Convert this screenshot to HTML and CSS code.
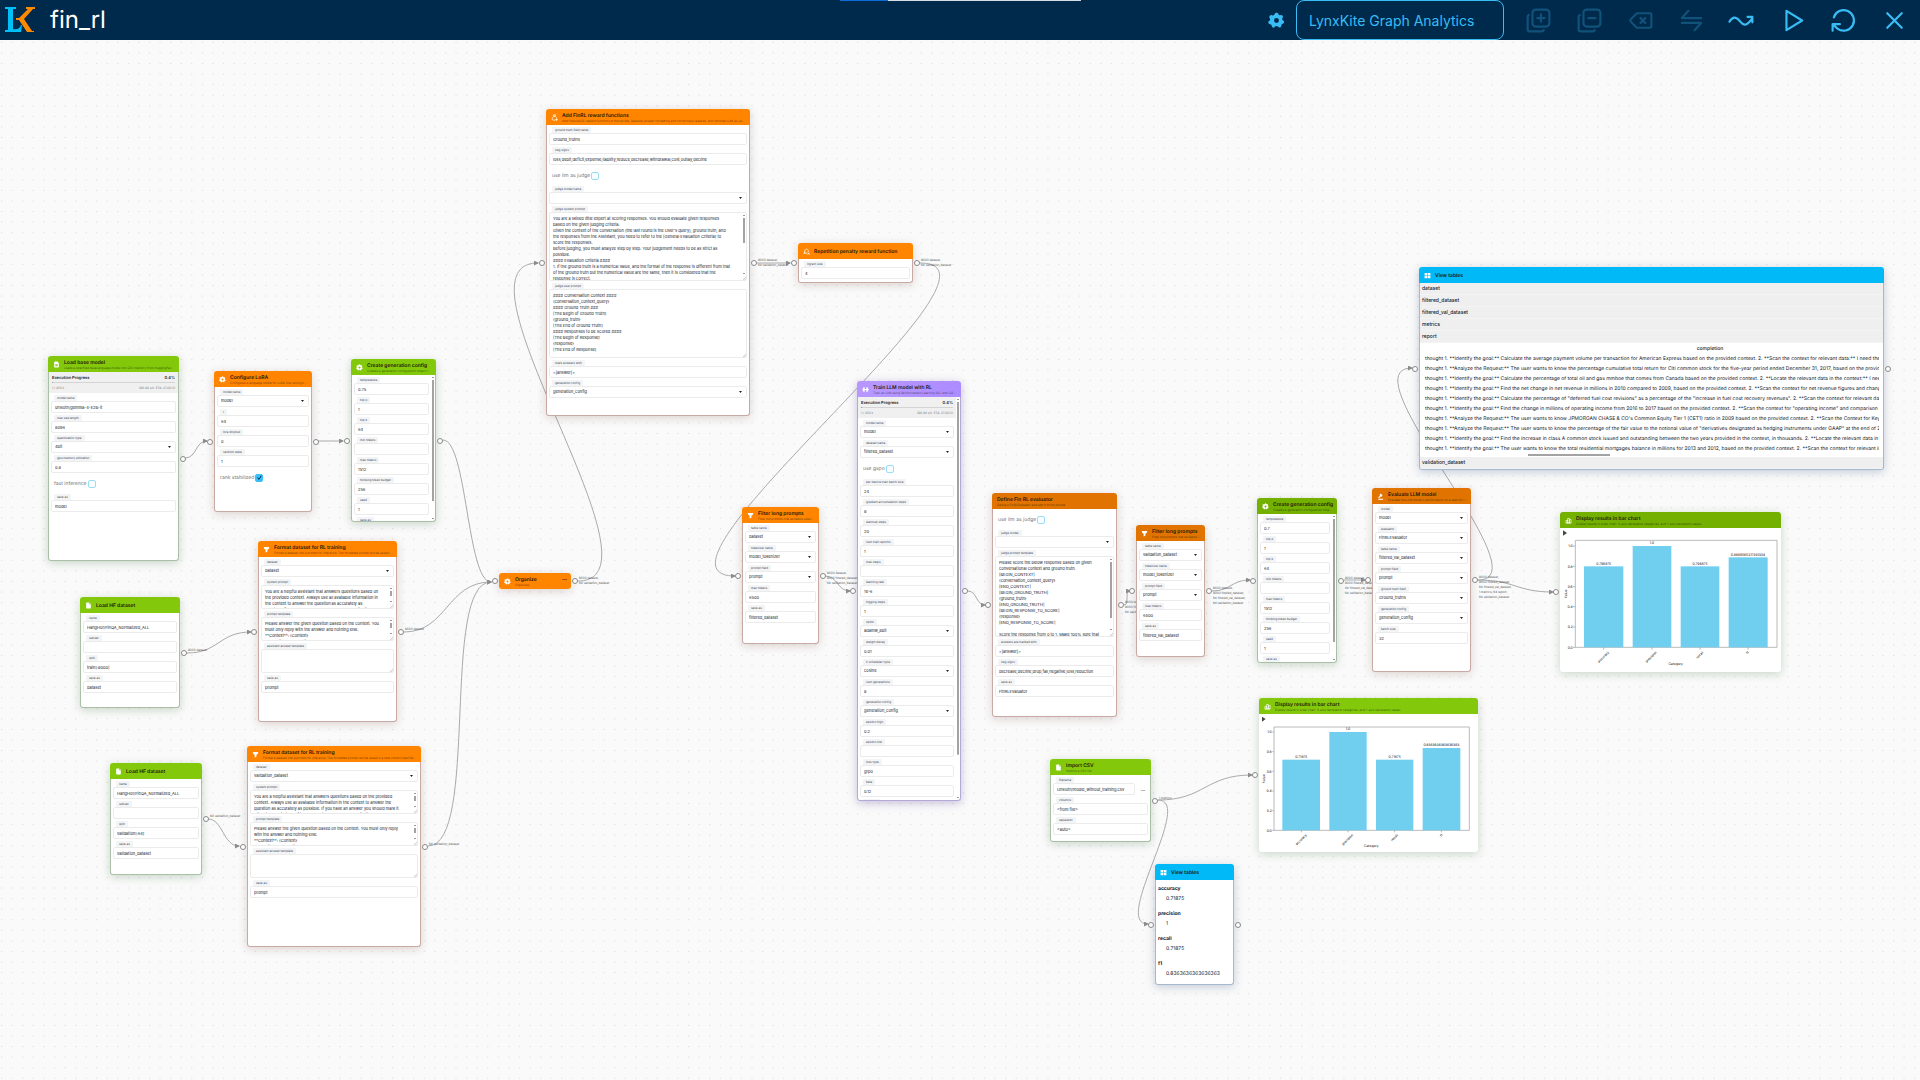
FILE: index.html
```html
<!DOCTYPE html>
<html lang="en">
<head>
<meta charset="utf-8">
<title>fin_rl</title>
<link rel="stylesheet" href="styles.css">
</head>
<body>
<svg class="sprite" aria-hidden="true">
  <symbol id="i-file" viewBox="0 0 24 24"><path fill="currentColor" d="M6 2h8v6h6v12a2 2 0 0 1-2 2H6a2 2 0 0 1-2-2V4a2 2 0 0 1 2-2zm10 0 4 4h-4z"/></symbol>
  <symbol id="i-model" viewBox="0 0 24 24"><path fill="currentColor" fill-rule="evenodd" d="M6 2h9l5 5v13a2 2 0 0 1-2 2H6a2 2 0 0 1-2-2V4a2 2 0 0 1 2-2zm2 9v7h8v-7zm2 2h1v3h-1zm3 0h1v3h-1z"/></symbol>
  <symbol id="i-gear" viewBox="0 0 24 24"><path fill="currentColor" fill-rule="evenodd" d="M14.6 2.8c-.7-2.4-4.500-2.400-5.200 0a2.700 2.700 0 0 1-4 1.700C3.200 3.400.9 6.800 2.100 8.300a2.700 2.700 0 0 1-.9 4.500v0c-1.600 1.500-.6 4.300 1.700 4.500a2.700 2.700 0 0 1 2.500 2.800c.4 2.400 3.700 2.500 4.300.9a2.700 2.700 0 0 1 4.600 0c1.500 1.500 4.500.7 4.500-1.700a2.700 2.700 0 0 1 2.300-2.700c2.300-.9 2-3.700.4-4.500a2.700 2.700 0 0 1-.6-4.200c1-2-1.300-4.500-3.300-3.400a2.700 2.700 0 0 1-3-1.700zM12 8.500a3.500 3.500 0 1 1 0 7 3.500 3.500 0 0 1 0-7z"/></symbol>
  <symbol id="i-filter" viewBox="0 0 24 24"><path fill="currentColor" d="M3 3h18v4.500l-6 6V20l-6 2v-8.500l-6-6z"/></symbol>
  <symbol id="i-bag" viewBox="0 0 24 24"><path fill="none" stroke="currentColor" stroke-width="2.500" stroke-linecap="round" d="M9 3h7l-2 5h-4zM14 21H8c-5 0-5-6-2-9l4-4h4l4 4M16 19h6m-3-3v6"/></symbol>
  <symbol id="i-penalty" viewBox="0 0 24 24"><path fill="none" stroke="currentColor" stroke-width="2.500" stroke-linecap="round" d="M6 17V9c0-7 12-7 12 0v5M3 18l3-4M5 18h8M17 17l5 5m0-5-5 5"/></symbol>
  <symbol id="i-train" viewBox="0 0 24 24"><path fill="currentColor" d="M1 10h2V7a1 1 0 0 1 2 0V5a1.500 1.500 0 0 1 4 0v5h6V5a1.500 1.500 0 0 1 4 0v2a1 1 0 0 1 2 0v3h2v4h-2v3a1 1 0 0 1-2 0v2a1.500 1.500 0 0 1-4 0v-5H9v5a1.500 1.500 0 0 1-4 0v-2a1 1 0 0 1-2 0v-3H1z"/></symbol>
  <symbol id="i-gavel" viewBox="0 0 24 24"><path fill="currentColor" d="m12 2 7 6-4 5-2-1-6 6-3-3 6-6-1-2zM4 20h17v3H4z"/></symbol>
  <symbol id="i-chart" viewBox="0 0 24 24"><path fill="none" stroke="currentColor" stroke-width="2.300" d="M3 12h6v8H3zM9 5h6v15H9zM15 9h6v11h-6zM3 21h18"/></symbol>
  <symbol id="i-grid" viewBox="0 0 24 24"><path fill="currentColor" d="M2 3h9v8H2zM13 3h9v8h-9zM2 13h9v8H2zM13 13h9v8h-9z"/></symbol>
</svg>

<header class="topbar">
  <div class="loading"></div>
  <a class="logo" href="#" aria-label="LynxKite">
    <svg viewBox="0 0 32 28"><path fill="#00c0f8" d="M1 1h11v2H9v20c5 1 7-1 8-4h1l-1 7H1v-2h3V3H1z"/><path fill="#ff8a00" d="M22 1h9v2h-2l-9 10 8 12h2v1h-7l-8-12h-3v-2h3l9-9h-2z"/></svg>
  </a>
  <h1 class="workspace">fin_rl</h1>
  <div class="tools">
    <svg class="gear"><use href="#i-gear"/></svg>
    <select class="env" aria-label="Environment"><option>LynxKite Graph Analytics</option></select>
    <div class="actions">
      <button disabled aria-label="Group"><svg viewBox="0 0 24 24"><path d="M7 5.700A2.700 2.700 0 0 1 9.700 3h8.600A2.700 2.700 0 0 1 21 5.700v8.600a2.700 2.700 0 0 1-2.700 2.700H9.700A2.700 2.700 0 0 1 7 14.300zM4 7.500A2 2 0 0 0 3 9.300v9.900c0 1 .8 1.800 1.800 1.800h9.900c.8 0 1.300-.4 1.700-1M11 10h6M14 7v6"/></svg></button>
      <button disabled aria-label="Ungroup"><svg viewBox="0 0 24 24"><path d="M7 5.700A2.700 2.700 0 0 1 9.700 3h8.600A2.700 2.700 0 0 1 21 5.700v8.600a2.700 2.700 0 0 1-2.700 2.700H9.700A2.700 2.700 0 0 1 7 14.300zM4 7.500A2 2 0 0 0 3 9.300v9.900c0 1 .8 1.800 1.800 1.800h9.900c.8 0 1.300-.4 1.700-1M11 10h6"/></svg></button>
      <button disabled aria-label="Delete"><svg viewBox="0 0 24 24"><path d="M20 6a1 1 0 0 1 1 1v10a1 1 0 0 1-1 1H9l-5-5a1.500 1.500 0 0 1 0-2l5-5zM12 10l4 4M16 10l-4 4"/></svg></button>
      <button disabled aria-label="Change type"><svg viewBox="0 0 24 24"><path d="M20 10H4l5.500-6M4 14h16l-5.500 6"/></svg></button>
      <button aria-label="Restart paths"><svg viewBox="0 0 24 24"><path d="M2 13c3-5 6-4 9 0s6 3 10-3M17 9h4v4.500"/></svg></button>
      <button aria-label="Run"><svg viewBox="0 0 24 24"><path d="M7 4v16l13-8z"/></svg></button>
      <button aria-label="Reload"><svg viewBox="0 0 24 24"><path d="M4 9.500a8.500 8.500 0 1 1 3 9.200M3 20.500V15h6M3.500 15.500l3.500 3.200"/></svg></button>
      <button aria-label="Close"><svg viewBox="0 0 24 24"><path d="M18 6 6 18M6 6l12 12"/></svg></button>
    </div>
  </div>
</header>

<main class="canvas">
  <svg class="edges">
    <defs>
      <pattern id="dots" x="0" y="0" width="10.570" height="10.570" patternUnits="userSpaceOnUse"><circle cx="1.600" cy="2.400" r=".7" fill="#dedede"/></pattern>
      <marker id="arrow" viewBox="0 0 5 5" refX="4" refY="2.500" markerWidth="5" markerHeight="5" orient="auto"><path d="M0 0l5 2.500-5 2.500z" fill="#8c8c8c"/></marker>
    </defs>
    <rect width="100%" height="100%" fill="url(#dots)"/>
    <g class="lines" transform="translate(0 -40)">
      <path d="M185 458C197 458 195 441 207 441"/>
      <path d="M318 441H343"/>
      <path d="M443 440C467 440 467 582 491 582"/>
      <path d="M187 653C219 653 219 632 251 632"/>
      <path d="M404 632C447 632 447 582 491 582"/>
      <path d="M208 819C223 819 223 846 239 846"/>
      <path d="M428 846C480 846 440 582 491 582"/>
      <path d="M578 581C674 581 442 263 538 263"/>
      <path d="M757 263H790"/>
      <path d="M920 263C1032 263 623 576 735 576"/>
      <path d="M825 576C838 576 837 591 850 591"/>
      <path d="M968 591C977 591 976 605 985 605"/>
      <path d="M1124 605C1130 605 1124 591 1130 591"/>
      <path d="M1212 591C1231 591 1231 580 1250 580"/>
      <path d="M1344 580H1365"/>
      <path d="M1478 580C1515 580 1516 592 1553 592"/>
      <path d="M1478 580C1546 580 1344 368 1412 368"/>
      <path d="M1158 800C1205 800 1205 775 1252 775"/>
      <path d="M1158 800C1195 800 1111 924 1148 924"/>
    </g>
  </svg>

  <section class="node green n-base">
    <header><svg><use href="#i-model"/></svg><div><h2>Load base model</h2><p>Loads a specified base language model into GPU memory from HuggingFace (or local path).</p></div></header>
    <div class="body">
      <div class="progress"><div><b>Execution Progress</b><b>0.4%</b></div><progress value="1" max="250"></progress><div><span>1 / 250 it</span><span>390.49 s/it &nbsp;ETA: 27:00:31</span></div></div>
      <label class="field"><span>model name</span><input value="unsloth/gemma-4-E2B-it"></label>
      <label class="field"><span>max seq length</span><input value="8096"></label>
      <label class="field"><span>quantization type</span><select><option>4bit</option></select></label>
      <label class="field"><span>gpu memory utilization</span><input value="0.8"></label>
      <label class="check">fast inference<input type="checkbox"></label>
      <label class="field"><span>save as</span><input value="model"></label>
    </div>
    <i class="port out"></i>
  </section>

  <section class="node orange n-lora">
    <header><svg><use href="#i-gear"/></svg><div><h2>Configure LoRA</h2><p>Configures a language model for LoRA fine-tuning by adding adapters.</p></div></header>
    <div class="body">
      <label class="field"><span>model name</span><select><option>model</option></select></label>
      <label class="field"><span>r</span><input value="64"></label>
      <label class="field"><span>lora dropout</span><input value="0"></label>
      <label class="field"><span>random state</span><input value="1"></label>
      <label class="check">rank stabilized<input type="checkbox" checked></label>
    </div>
    <i class="port in"></i><i class="port out"></i>
  </section>

  <section class="node green n-gen1">
    <header><svg><use href="#i-gear"/></svg><div><h2>Create generation config</h2><p>Creates a generation configuration object that can be used.</p></div></header>
    <div class="body scroll">
      <label class="field"><span>temperature</span><input value="0.75"></label>
      <label class="field"><span>top p</span><input value="1"></label>
      <label class="field"><span>top k</span><input value="64"></label>
      <label class="field"><span>min tokens</span><input></label>
      <label class="field"><span>max tokens</span><input value="1512"></label>
      <label class="field"><span>thinking token budget</span><input value="256"></label>
      <label class="field"><span>seed</span><input value="1"></label>
      <label class="field"><span>save as</span><input value="generation_config"></label>
    </div>
    <i class="port in"></i><i class="port out"></i>
  </section>

  <section class="node orange n-format1">
    <header><svg><use href="#i-filter"/></svg><div><h2>Format dataset for RL training</h2><p>Format a dataset into a prompt for inference. The formatted prompt will be saved in a new column.</p></div></header>
    <div class="body">
      <label class="field"><span>dataset</span><select><option>dataset</option></select></label>
      <label class="field"><span>system prompt</span><textarea class="long">You are a helpful assistant that answers questions based on
the provided context. Always use all available information in
the context to answer the question as accurately as
possible. If you have an answer you should mark it with
&lt;|answer|&gt; tags.</textarea></label>
      <label class="field"><span>prompt template</span><textarea class="long">Please answer the given question based on the context. You
must only reply with the answer and nothing else.
**Context**: {Context}
**Question**: {Question}</textarea></label>
      <label class="field"><span>assistant answer template</span><textarea></textarea></label>
      <label class="field"><span>save as</span><input value="prompt"></label>
    </div>
    <i class="port in"></i><i class="port out"></i><p class="tables">8000 dataset</p>
  </section>

  <section class="node green n-hf1">
    <header><svg><use href="#i-file"/></svg><div><h2>Load HF dataset</h2></div></header>
    <div class="body">
      <label class="field"><span>name</span><input value="HangHor/FinQA_Normalized_ALL"></label>
      <label class="field"><span>subset</span><input></label>
      <label class="field"><span>split</span><input value="train[:8000]"></label>
      <label class="field"><span>save as</span><input value="dataset"></label>
    </div>
    <i class="port out"></i><p class="tables">8000 dataset</p>
  </section>

  <section class="node green n-hf2">
    <header><svg><use href="#i-file"/></svg><div><h2>Load HF dataset</h2></div></header>
    <div class="body">
      <label class="field"><span>name</span><input value="HangHor/FinQA_Normalized_ALL"></label>
      <label class="field"><span>subset</span><input></label>
      <label class="field"><span>split</span><input value="validation[:64]"></label>
      <label class="field"><span>save as</span><input value="validation_dataset"></label>
    </div>
    <i class="port out"></i><p class="tables">64 validation_dataset</p>
  </section>

  <section class="node orange n-format2">
    <header><svg><use href="#i-filter"/></svg><div><h2>Format dataset for RL training</h2><p>Format a dataset into a prompt for inference. The formatted prompt will be saved in a new column specified by the user.</p></div></header>
    <div class="body">
      <label class="field"><span>dataset</span><select><option>validation_dataset</option></select></label>
      <label class="field"><span>system prompt</span><textarea class="long">You are a helpful assistant that answers questions based on the provided
context. Always use all available information in the context to answer the
question as accurately as possible. If you have an answer you should mark it
with &lt;|answer|&gt; tags. If the answer is a number, reply with it only.</textarea></label>
      <label class="field"><span>prompt template</span><textarea class="long">Please answer the given question based on the context. You must only reply
with the answer and nothing else.
**Context**: {Context}
**Question**: {Question}</textarea></label>
      <label class="field"><span>assistant answer template</span><textarea></textarea></label>
      <label class="field"><span>save as</span><input value="prompt"></label>
    </div>
    <i class="port in"></i><i class="port out"></i><p class="tables">64 validation_dataset</p>
  </section>

  <section class="node orange n-organize">
    <header><svg><use href="#i-gear"/></svg><div><h2>Organize</h2><p>Organizes</p></div><button aria-label="More">•••</button></header>
    <i class="port in"></i><i class="port out"></i><p class="tables">8000 dataset,<br>64 validation_dataset</p>
  </section>

  <section class="node orange n-reward">
    <header><svg><use href="#i-bag"/></svg><div><h2>Add FinRL reward functions</h2><p>Add financial RL reward functions to the bundle. Rewards answer formatting and correctness rewards, with optional LLM-as-Judge based scoring.</p></div></header>
    <div class="body">
      <label class="field"><span>ground truth field name</span><input value="Ground_truths"></label>
      <label class="field"><span>neg signs</span><input value="loss,debit,deficit,expense,liability,reduce,decrease,withdrawal,cost,outlay,decline"></label>
      <label class="check">use llm as judge<input type="checkbox"></label>
      <label class="field"><span>judge model name</span><select><option></option></select></label>
      <label class="field"><span>judge system prompt</span><textarea class="tall long">You are a skilled little expert at scoring responses. You should evaluate given responses
based on the given judging criteria.
Given the context of the conversation (the last round is the User's query), ground truth, and
the responses from the Assistant, you need to refer to the [General Evaluation Criteria] to
score the responses.
Before judging, you must analyze step by step. Your judgement needs to be as strict as
possible.
#### Evaluation Criteria ####
1. If the ground truth is a numerical value, and the format of the response is different from that
of the ground truth but the numerical value are the same, then it is considered that the
response is correct.</textarea></label>
      <label class="field"><span>judge user prompt</span><textarea class="tall">#### Conversation Context ####
{conversation_context_query}
#### Ground Truth ###
[The Begin of Ground Truth]
{ground_truth}
[The End of Ground Truth]
#### Responses to be Scored ####
[The Begin of Response]
{response}
[The End of Response]</textarea></label>
      <label class="field"><span>mark answers with</span><input value="&lt;|answer|&gt;"></label>
      <label class="field"><span>generation config</span><select><option>generation_config</option></select></label>
    </div>
    <i class="port in"></i><i class="port out"></i><p class="tables">8000 dataset,<br>64 validation_dataset</p>
  </section>

  <section class="node orange n-repeat">
    <header><svg><use href="#i-penalty"/></svg><div><h2>Repetition penalty reward function</h2></div></header>
    <div class="body">
      <label class="field"><span>ngram size</span><input value="4"></label>
    </div>
    <i class="port in"></i><i class="port out"></i><p class="tables">8000 dataset,<br>64 validation_dataset</p>
  </section>

  <section class="node purple n-train">
    <header><svg><use href="#i-train"/></svg><div><h2>Train LLM model with RL</h2><p>Train an LLM using Reinforcement Learning (RL) with GRPO</p></div></header>
    <div class="body scroll">
      <div class="progress"><div><b>Execution Progress</b><b>0.4%</b></div><progress value="1" max="250"></progress><div><span>1 / 250 it</span><span>390.49 s/it &nbsp;ETA: 27:00:31</span></div></div>
      <label class="field"><span>model name</span><select><option>model</option></select></label>
      <label class="field"><span>dataset name</span><select><option>filtered_dataset</option></select></label>
      <label class="check">use gspo<input type="checkbox"></label>
      <label class="field"><span>per device train batch size</span><input value="24"></label>
      <label class="field"><span>gradient accumulation steps</span><input value="8"></label>
      <label class="field"><span>warmup steps</span><input value="20"></label>
      <label class="field"><span>num train epochs</span><input value="1"></label>
      <label class="field"><span>max steps</span><input></label>
      <label class="field"><span>learning rate</span><input value="1e-6"></label>
      <label class="field"><span>logging steps</span><input value="1"></label>
      <label class="field"><span>optim</span><select><option>adamw_8bit</option></select></label>
      <label class="field"><span>weight decay</span><input value="0.01"></label>
      <label class="field"><span>lr scheduler type</span><select><option>cosine</option></select></label>
      <label class="field"><span>num generations</span><input value="8"></label>
      <label class="field"><span>generation config</span><select><option>generation_config</option></select></label>
      <label class="field"><span>epsilon high</span><input value="0.2"></label>
      <label class="field"><span>epsilon low</span><input></label>
      <label class="field"><span>loss type</span><input value="grpo"></label>
      <label class="field"><span>beta</span><input value="0.12"></label>
      <label class="field"><span>save as</span><input value="model"></label>
    </div>
    <i class="port in"></i><i class="port out"></i>
  </section>

  <section class="node orange n-filter1">
    <header><svg><use href="#i-filter"/></svg><div><h2>Filter long prompts</h2><p>Filter out prompts that exceed a specified token count.</p></div></header>
    <div class="body">
      <label class="field"><span>table name</span><select><option>dataset</option></select></label>
      <label class="field"><span>tokenizer name</span><select><option>model_tokenizer</option></select></label>
      <label class="field"><span>prompt field</span><select><option>prompt</option></select></label>
      <label class="field"><span>max tokens</span><input value="6500"></label>
      <label class="field"><span>save as</span><input value="filtered_dataset"></label>
    </div>
    <i class="port in"></i><i class="port out"></i><p class="tables">8000 dataset,<br>8000 filtered_dataset,<br>64 validation_dataset</p>
  </section>

  <section class="node amber n-define">
    <header><div><h2>Define Fin RL evaluator</h2><p>Define a FinRLEvaluator and add it to the bundle.</p></div></header>
    <div class="body">
      <label class="check">use llm as judge<input type="checkbox"></label>
      <label class="field"><span>judge model</span><select><option></option></select></label>
      <label class="field"><span>judge prompt template</span><textarea class="taller long">Please score the below response based on given
conversational context and ground truth.
[BEGIN_CONTEXT]
{conversation_context_query}
[END_CONTEXT]
[BEGIN_GROUND_TRUTH]
{ground_truth}
[END_GROUND_TRUTH]
[BEGIN_RESPONSE_TO_SCORE]
{response}
[END_RESPONSE_TO_SCORE]

Score the response from 0 to 1. Make 100% sure that
you reply with the score.</textarea></label>
      <label class="field"><span>answers are marked with</span><input value="&lt;|answer|&gt;"></label>
      <label class="field"><span>neg signs</span><input value="decrease,decline,drop,fall,negative,loss,reduction"></label>
      <label class="field"><span>save as</span><input value="FinRLEvaluator"></label>
    </div>
    <i class="port in"></i><i class="port out"></i><p class="tables">8000 dataset,<br>8000 filtered_dataset,<br>64 validation_dataset</p>
  </section>

  <section class="node amber n-filter2">
    <header><svg><use href="#i-filter"/></svg><div><h2>Filter long prompts</h2><p>Filter out prompts that exceed a specified token count.</p></div></header>
    <div class="body">
      <label class="field"><span>table name</span><select><option>validation_dataset</option></select></label>
      <label class="field"><span>tokenizer name</span><select><option>model_tokenizer</option></select></label>
      <label class="field"><span>prompt field</span><select><option>prompt</option></select></label>
      <label class="field"><span>max tokens</span><input value="6500"></label>
      <label class="field"><span>save as</span><input value="filtered_val_dataset"></label>
    </div>
    <i class="port in"></i><i class="port out"></i><p class="tables">8000 dataset,<br>8000 filtered_dataset,<br>64 filtered_val_dataset,<br>64 validation_dataset</p>
  </section>

  <section class="node moss n-gen2">
    <header><svg><use href="#i-gear"/></svg><div><h2>Create generation config</h2><p>Creates a generation configuration object that can be used.</p></div></header>
    <div class="body scroll">
      <label class="field"><span>temperature</span><input value="0.7"></label>
      <label class="field"><span>top p</span><input value="1"></label>
      <label class="field"><span>top k</span><input value="64"></label>
      <label class="field"><span>min tokens</span><input></label>
      <label class="field"><span>max tokens</span><input value="1512"></label>
      <label class="field"><span>thinking token budget</span><input value="256"></label>
      <label class="field"><span>seed</span><input value="1"></label>
      <label class="field"><span>save as</span><input value="generation_config"></label>
    </div>
    <i class="port in"></i><i class="port out"></i><p class="tables">8000 dataset,<br>8000 filtered_dataset,<br>64 filtered_val_dataset,<br>64 validation_dataset</p>
  </section>

  <section class="node amber n-eval">
    <header><svg><use href="#i-gavel"/></svg><div><h2>Evaluate LLM model</h2><p>Evaluate the LLM model's performance on a specific task using metrics.</p></div></header>
    <div class="body">
      <label class="field"><span>model</span><select><option>model</option></select></label>
      <label class="field"><span>evaluator</span><select><option>FinRLEvaluator</option></select></label>
      <label class="field"><span>table name</span><select><option>filtered_val_dataset</option></select></label>
      <label class="field"><span>prompt field</span><select><option>prompt</option></select></label>
      <label class="field"><span>ground truth field</span><select><option>Ground_truths</option></select></label>
      <label class="field"><span>generation config</span><select><option>generation_config</option></select></label>
      <label class="field"><span>batch size</span><input value="32"></label>
    </div>
    <i class="port in"></i><i class="port out"></i><p class="tables">8000 dataset,<br>8000 filtered_dataset,<br>64 filtered_val_dataset,<br>1 metrics, 64 report,<br>64 validation_dataset</p>
  </section>

  <section class="node moss n-chart1">
    <header><svg><use href="#i-chart"/></svg><div><h2>Display results in bar chart</h2><p>Display results in a bar chart. X-axis represents categories, and Y-axis represents values.</p></div></header>
    <div class="body chart">
      <svg viewBox="631 174 663 432">
        <path class="tri" d="M640 181v16l12-8z"/>
        <path class="frame" d="M677 211h605v321H677zM670 532h7M670 471h7M670 410h7M670 350h7M670 289h7M670 228h7M762 532v7M907 532v7M1051 532v7M1195 532v7"/>
        <g class="bars"><rect x="703" y="289" width="118" height="243"/><rect x="849" y="228" width="116" height="304"/><rect x="993" y="289" width="116" height="243"/><rect x="1137" y="262" width="117" height="270"/></g>
        <g class="mid"><text x="762" y="284">0.796875</text><text x="907" y="223">1.0</text><text x="1051" y="284">0.796875</text><text x="1195" y="257">0.8869565217391304</text><text x="978" y="585">Category</text><text transform="translate(651 372) rotate(-90)">Value</text></g>
        <g class="end"><text x="669" y="536">0.0</text><text x="669" y="475">0.2</text><text x="669" y="414">0.4</text><text x="669" y="354">0.6</text><text x="669" y="293">0.8</text><text x="669" y="232">1.0</text><text transform="translate(779 548) rotate(-45)">accuracy</text><text transform="translate(922 548) rotate(-45)">precision</text><text transform="translate(1062 548) rotate(-45)">recall</text><text transform="translate(1199 548) rotate(-45)">f1</text></g>
      </svg>
    </div>
    <i class="port in"></i>
  </section>

  <section class="node sky n-view1">
    <header><svg><use href="#i-grid"/></svg><div><h2>View tables</h2></div></header>
    <div class="body views">
      <button>dataset</button><button>filtered_dataset</button><button>filtered_val_dataset</button><button>metrics</button><button>report</button>
      <div class="report">
        <table>
          <thead><tr><th>completion</th></tr></thead>
          <tbody>
            <tr><td>thought 1. **Identify the goal:** Calculate the average payment volume per transaction for American Express based on the provided context. 2. **Scan the context for relevant data:** I need the payment volume</td></tr>
            <tr><td>thought 1. **Analyze the Request:** The user wants to know the percentage cumulative total return for Citi common stock for the five-year period ended December 31, 2017, based on the provided context.</td></tr>
            <tr><td>thought 1. **Identify the goal:** Calculate the percentage of total oil and gas mmboe that comes from Canada based on the provided context. 2. **Locate the relevant data in the context:** I need the total</td></tr>
            <tr><td>thought 1. **Identify the goal:** Find the net change in net revenue in millions in 2010 compared to 2009, based on the provided context. 2. **Scan the context for net revenue figures and changes:** The</td></tr>
            <tr><td>thought 1. **Identify the goal:** Calculate the percentage of "deferred fuel cost revisions" as a percentage of the "increase in fuel cost recovery revenues". 2. **Scan the context for relevant data points</td></tr>
            <tr><td>thought 1. **Identify the goal:** Find the change in millions of operating income from 2016 to 2017 based on the provided context. 2. **Scan the context for "operating income" and comparison data (2016</td></tr>
            <tr><td>thought 1. **Analyze the Request:** The user wants to know JPMORGAN CHASE &amp; CO's Common Equity Tier 1 (CET1) ratio in 2009 based on the provided context. 2. **Scan the Context for Keywords and</td></tr>
            <tr><td>thought 1. **Analyze the Request:** The user wants to know the percentage of the fair value to the notional value of "derivatives designated as hedging instruments under GAAP" at the end of 2014, based</td></tr>
            <tr><td>thought 1. **Identify the goal:** Find the increase in class A common stock issued and outstanding between the two years provided in the context, in thousands. 2. **Locate the relevant data in the context</td></tr>
            <tr><td>thought 1. **Identify the goal:** The user wants to know the total residential mortgages balance in millions for 2013 and 2012, based on the provided context. 2. **Scan the context for relevant information</td></tr>
          </tbody>
        </table>
        <i class="bar-v"></i><i class="bar-h"></i>
      </div>
      <button>validation_dataset</button>
    </div>
    <i class="port in"></i><i class="port out"></i>
  </section>

  <section class="node green n-csv">
    <header><svg><use href="#i-file"/></svg><div><h2>Import CSV</h2><p>Imports a CSV file.</p></div></header>
    <div class="body">
      <div class="with-button"><label class="field"><span>filename</span><input value="Unsloth/model_without_training.csv"></label><button aria-label="Browse">…</button></div>
      <label class="field"><span>columns</span><input value="&lt;from file&gt;"></label>
      <label class="field"><span>separator</span><input value="&lt;auto&gt;"></label>
    </div>
    <i class="port out"></i><p class="tables">1 metrics</p>
  </section>

  <section class="node green n-chart2">
    <header><svg><use href="#i-chart"/></svg><div><h2>Display results in bar chart</h2><p>Display results in a bar chart. X-axis represents categories, and Y-axis represents values.</p></div></header>
    <div class="body chart">
      <svg viewBox="688 73 657 414">
        <path class="tri" d="M697 81v15l11-8z"/>
        <path class="frame" d="M733 112h586v310H733zM728 422h5M728 363h5M728 304h5M728 245h5M728 186h5M728 127h5M815 422v6M955 422v6M1095 422v6M1235 422v6"/>
        <g class="bars"><rect x="758" y="210" width="113" height="212"/><rect x="899" y="127" width="112" height="295"/><rect x="1039" y="210" width="112" height="212"/><rect x="1179" y="175" width="113" height="247"/></g>
        <g class="mid"><text x="815" y="205">0.71875</text><text x="955" y="122">1.0</text><text x="1095" y="205">0.71875</text><text x="1235" y="170">0.8363636363636363</text><text x="1025" y="473">Category</text><text transform="translate(707 267) rotate(-90)">Value</text></g>
        <g class="end"><text x="726" y="426">0.0</text><text x="726" y="367">0.2</text><text x="726" y="308">0.4</text><text x="726" y="249">0.6</text><text x="726" y="190">0.8</text><text x="726" y="131">1.0</text><text transform="translate(832 437) rotate(-45)">accuracy</text><text transform="translate(971 437) rotate(-45)">precision</text><text transform="translate(1106 437) rotate(-45)">recall</text><text transform="translate(1240 437) rotate(-45)">f1</text></g>
      </svg>
    </div>
    <i class="port in"></i>
  </section>

  <section class="node sky n-view2">
    <header><svg><use href="#i-grid"/></svg><div><h2>View tables</h2></div></header>
    <dl class="body metrics">
      <dt>accuracy</dt><dd>0.71875</dd>
      <dt>precision</dt><dd>1</dd>
      <dt>recall</dt><dd>0.71875</dd>
      <dt>f1</dt><dd>0.8363636363636363</dd>
    </dl>
    <i class="port in"></i><i class="port out"></i>
  </section>
</main>
</body>
</html>
```
FILE: styles.css
```css
* { box-sizing: border-box; }
html, body { height: 100%; }
body {
  margin: 0;
  display: flex;
  flex-direction: column;
  overflow: hidden;
  background: #fafafa;
  color: #111827;
  font-family: Inter, "Liberation Sans", sans-serif;
  text-rendering: geometricPrecision;
}
h1, h2, p, dl, dd { margin: 0; }
button, input, select, textarea { font: inherit; color: inherit; margin: 0; }
.sprite { position: absolute; width: 0; height: 0; }

/* Top bar */
.topbar {
  position: relative;
  flex: none;
  display: flex;
  align-items: center;
  height: 40px;
  padding-left: 4px;
  background: #002a4c;
  color: #39bcf3;
}
.loading {
  position: absolute;
  top: 0;
  left: 840px;
  width: 241px;
  height: 1px;
  background: linear-gradient(90deg, #0b6bd8 48px, #d5dce3 48px);
}
.logo { display: flex; width: 32px; height: 28px; margin-right: 14px; }
.logo svg { width: 100%; height: 100%; }
.workspace { font-size: 24px; line-height: 40px; font-weight: 400; color: #fff; }
.tools { display: flex; align-items: center; margin-left: auto; }
.gear { width: 17px; height: 17px; margin-right: 11px; }
.env {
  appearance: none;
  width: 208px;
  height: 40px;
  margin-right: 9px;
  padding: 0 12px;
  border: 1px solid #39bcf3;
  border-radius: 8px;
  background: transparent;
  font-size: 14px;
}
.actions { display: flex; width: 407px; }
.actions button {
  flex: 1;
  display: grid;
  place-items: center;
  height: 40px;
  padding: 0;
  border: 0;
  background: none;
}
.actions button:disabled { color: #11527a; }
.actions svg {
  width: 29px;
  height: 29px;
  fill: none;
  stroke: currentColor;
  stroke-width: 1.8;
  stroke-linecap: round;
  stroke-linejoin: round;
}

/* Canvas */
.canvas { position: relative; flex: 1; overflow: hidden; }
.edges { position: absolute; inset: 0; width: 100%; height: 100%; }
.lines path { fill: none; stroke: #aaa; marker-end: url(#arrow); }

/* Nodes */
.node {
  --edge: #c9a9a4;
  --glow: #54281c30;
  position: absolute;
  display: flex;
  flex-direction: column;
  border-radius: 3px;
  background: #fff;
  box-shadow: 0 2px 10px var(--glow);
}
.node > header {
  flex: none;
  display: flex;
  align-items: center;
  gap: 4px;
  height: 16px;
  padding: 1px 4px 0 5px;
  border-radius: 3px 3px 0 0;
  background: var(--head);
}
.node > header svg { flex: none; width: 7px; height: 7px; color: #fff; }
.node > header div { flex: 1; min-width: 0; }
.node > header button { align-self: flex-start; padding: 3px 0 0; border: 0; background: none; font-size: 3px; line-height: 5px; }
.node h2 { font-size: 5px; line-height: 6px; font-weight: 600; white-space: nowrap; color: #241808; }
.node header p {
  overflow: hidden;
  font-size: 3px;
  line-height: 4px;
  white-space: nowrap;
  text-overflow: ellipsis;
  color: #0009;
}
.green { --head: #83c80b; --edge: #a9bfa6; --glow: #1c541c38; }
.moss { --head: #74b000; --edge: #a9bfa6; --glow: #1c541c38; }
.orange { --head: #ff8400; }
.amber { --head: #e17400; }
.purple { --head: linear-gradient(90deg, #b898ff, #ac8cff); --edge: #b3a9d6; --glow: #3a1c8444; }
.sky { --head: #00b9f6; --edge: #a5b9cc; --glow: #1c3c7440; }
.n-organize > header { border-radius: 3px; }

.body {
  flex: 1;
  min-height: 0;
  display: flex;
  flex-direction: column;
  gap: 2px;
  overflow: hidden;
  padding: 2px 2px 0;
  border: 1px solid var(--edge);
  border-top: 0;
  border-radius: 0 0 3px 3px;
}
.body > * { flex: none; }
.scroll {
  overflow-y: auto;
  padding-right: 6px;
  background:
    linear-gradient(#999, #999) no-repeat right 1px top 2px / 2px 1px,
    linear-gradient(#999, #999) no-repeat right 1px bottom 2px / 2px 1px,
    linear-gradient(#a3a3a3, #a3a3a3) no-repeat right 1px top 5px / 2px calc(90% - 10px);
}

.field { display: flex; flex-direction: column; align-items: flex-start; min-width: 0; }
.field span {
  height: 6px;
  margin-left: 3px;
  padding: 0 3px;
  border-radius: 1px;
  background: #f3f4f6;
  font-size: 3px;
  line-height: 6px;
  color: #374151;
}
.field input, .field select, .field textarea {
  width: 100%;
  height: 12px;
  padding: 0 3px;
  border: 1px solid #ebebeb;
  border-radius: 2px;
  outline: 0;
  background: #fff;
  font-size: 4px;
  line-height: 6px;
}
.field select {
  appearance: none;
  background: #fff url("data:image/svg+xml,%3Csvg xmlns='http://www.w3.org/2000/svg' viewBox='0 0 3 2'%3E%3Cpath d='M0 0h3L1.500 2z' fill='%23222'/%3E%3C/svg%3E") no-repeat right 4px center / 3px 2px;
}
.field textarea {
  --grip: url("data:image/svg+xml,%3Csvg xmlns='http://www.w3.org/2000/svg' viewBox='0 0 4 4'%3E%3Cpath d='M0 4l4-4M2 4l2-2' stroke='%23999' stroke-width='.6'/%3E%3C/svg%3E") no-repeat right bottom / 3px 3px;
  display: block;
  height: 24px;
  padding: 3px;
  resize: none;
  overflow-x: hidden;
  overflow-y: auto;
  white-space: pre;
  background: var(--grip), #fff;
}
.field textarea.tall { height: 69px; }
.field textarea.taller { height: 81px; }
.field textarea.long {
  --thumb: 5px;
  background:
    var(--grip),
    linear-gradient(#999, #999) no-repeat right 1px top 2px / 2px 1px,
    linear-gradient(#999, #999) no-repeat right 1px bottom 6px / 2px 1px,
    linear-gradient(#a3a3a3, #a3a3a3) no-repeat right 1px top 5px / 2px var(--thumb),
    #fff;
}
.field textarea.tall.long { --thumb: 25px; }
.field textarea.taller.long { --thumb: 56px; }

.check {
  display: flex;
  align-items: center;
  gap: 1px;
  height: 17px;
  padding-left: 3px;
  font-size: 5px;
  color: #777;
}
.check input {
  appearance: none;
  width: 8px;
  height: 8px;
  border: 1px solid #9bdcf7;
  border-radius: 2px;
  background: #fafdff;
}
.check input:checked {
  border-color: #3abff8;
  background: #3abff8 url("data:image/svg+xml,%3Csvg xmlns='http://www.w3.org/2000/svg' viewBox='0 0 8 8'%3E%3Cpath d='M1 4l2 3 4-6' fill='none' stroke='%23002' stroke-width='1.3'/%3E%3C/svg%3E") center / 5px 5px no-repeat;
}

.progress {
  display: flex;
  flex-direction: column;
  height: 21px;
  margin: -2px -2px 0;
  padding: 3px 3px 2px;
  background: #f0f0f0;
  font-size: 3px;
  line-height: 5px;
  color: #777;
}
.progress div { display: flex; justify-content: space-between; }
.progress b { font-size: 4px; font-weight: 600; color: #222; }
.progress progress {
  appearance: none;
  display: block;
  width: 100%;
  height: 1px;
  margin: 2px 0 3px;
  border: 0;
}
progress::-webkit-progress-bar { background: #d4d4d4; }
progress::-webkit-progress-value { background: #999; }

.with-button { display: flex; align-items: flex-end; gap: 3px; }
.with-button .field { flex: 1; }
.with-button button { width: 10px; height: 12px; padding: 0; border: 0; background: none; font-size: 5px; line-height: 9px; }

::-webkit-scrollbar { display: none; }

/* Ports and the tables leaving them */
.port {
  position: absolute;
  top: 50%;
  width: 6px;
  height: 6px;
  margin-top: -3px;
  border: 1px solid #888;
  border-radius: 50%;
  background: #fff;
}
.in { left: -7px; }
.out { right: -7px; }
.tables {
  position: absolute;
  top: 50%;
  left: 100%;
  margin: -5px 0 0 8px;
  font-size: 3px;
  line-height: 5px;
  white-space: nowrap;
  color: #555;
}

/* Charts */
.body.chart { padding: 0; border: 0; }
.chart svg { width: 100%; height: 100%; font-size: 10px; }
.chart .tri { fill: #444; }
.chart .frame { fill: none; stroke: #999; stroke-width: 2; }
.chart .bars { fill: #70ceef; }
.chart .mid { text-anchor: middle; }
.chart .end { text-anchor: end; }

/* Table views */
.body.views { gap: 0; padding: 0; background: #efefef; }
.views > button {
  height: 12px;
  padding: 0 2px;
  border: 0;
  border-bottom: 1px solid #f4f4f4;
  background: none;
  font-size: 5px;
  line-height: 11px;
  font-weight: 500;
  text-align: left;
}
.report { position: relative; flex: none; height: 114px; padding-top: 1px; overflow: hidden; background: #fff; border-right: 4px solid #fff; }
.report table { table-layout: fixed; width: 580px; border-collapse: collapse; font-size: 5px; line-height: 6px; }
.report th, .report td { height: 10px; padding: 2px 5px; overflow: hidden; white-space: nowrap; }
.report th { font-weight: 500; }
.bar-v, .bar-h { position: absolute; background: #a3a3a3; }
.bar-v { top: 6px; right: -3px; width: 2px; height: 16px; }
.bar-h { bottom: 1px; left: 108px; width: 82px; height: 2px; }

.body.metrics { gap: 0; padding: 6px 2px 0; font-size: 5px; line-height: 6px; }
.metrics dt { margin-bottom: 4px; font-weight: 700; }
.metrics dd { margin: 0 0 9px 8px; }

/* Node placement on the graph */
.n-base { left: 48px; top: 316px; width: 131px; height: 205px; }
.n-lora { left: 214px; top: 331px; width: 98px; height: 141px; }
.n-gen1 { left: 351px; top: 319px; width: 85px; height: 163px; }
.n-format1 { left: 258px; top: 501px; width: 139px; height: 181px; }
.n-hf1 { left: 80px; top: 557px; width: 100px; height: 111px; }
.n-hf2 { left: 110px; top: 723px; width: 92px; height: 112px; }
.n-format2 { left: 247px; top: 706px; width: 174px; height: 201px; }
.n-organize { left: 499px; top: 533px; width: 72px; height: 16px; }
.n-reward { left: 546px; top: 69px; width: 204px; height: 307px; }
.n-repeat { left: 798px; top: 203px; width: 115px; height: 40px; }
.n-train { left: 857px; top: 341px; width: 104px; height: 420px; }
.n-filter1 { left: 742px; top: 467px; width: 77px; height: 137px; }
.n-define { left: 992px; top: 453px; width: 125px; height: 224px; }
.n-filter2 { left: 1136px; top: 485px; width: 69px; height: 132px; }
.n-gen2 { left: 1257px; top: 458px; width: 80px; height: 165px; }
.n-eval { left: 1372px; top: 448px; width: 99px; height: 184px; }
.n-chart1 { left: 1560px; top: 472px; width: 221px; height: 160px; }
.n-view1 { left: 1419px; top: 227px; width: 465px; height: 203px; }
.n-csv { left: 1050px; top: 719px; width: 101px; height: 83px; }
.n-chart2 { left: 1259px; top: 658px; width: 219px; height: 154px; }
.n-view2 { left: 1155px; top: 824px; width: 79px; height: 121px; }
```
